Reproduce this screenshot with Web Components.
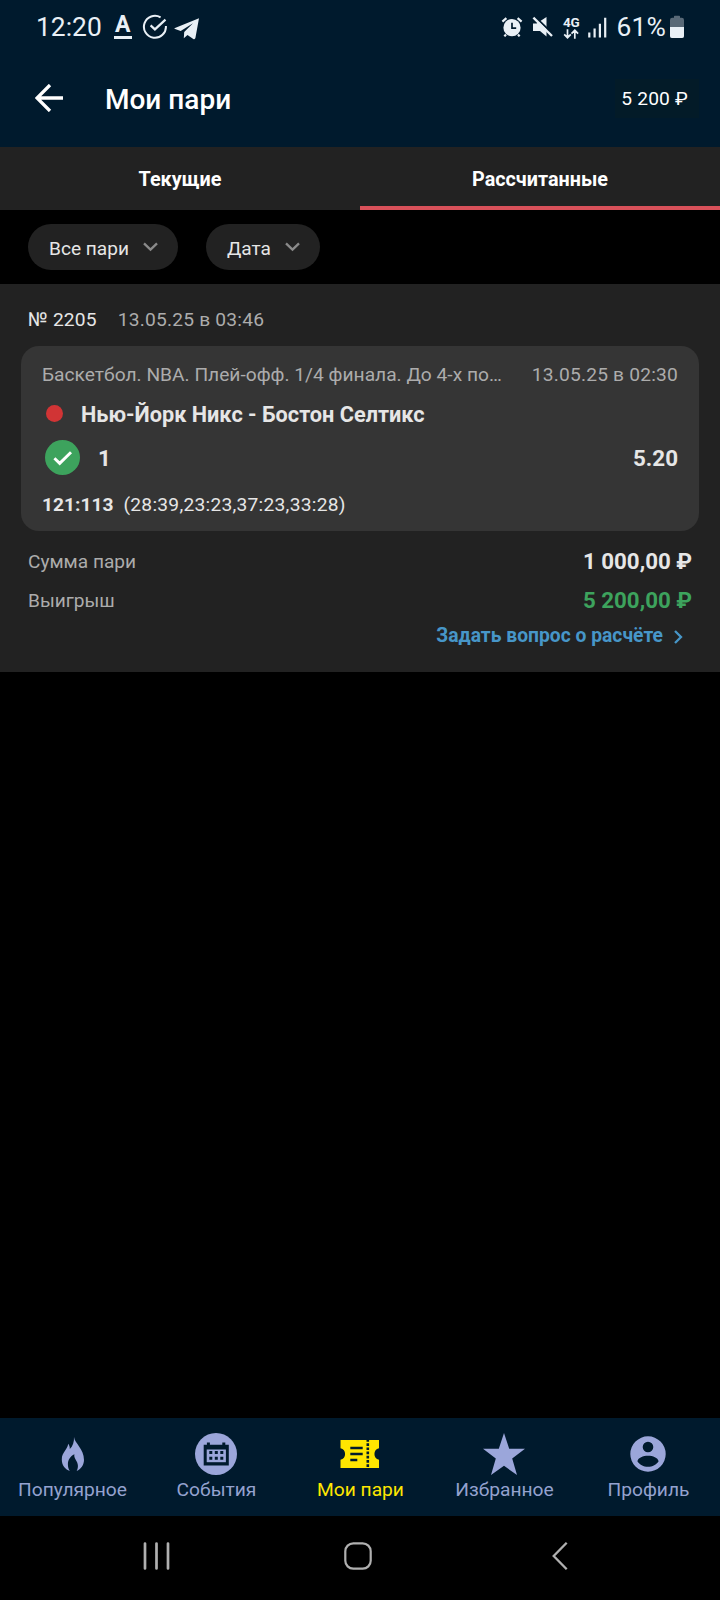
<!DOCTYPE html>
<html lang="ru">
<head>
<meta charset="utf-8">
<title>Мои пари</title>
<style>
    body {
        margin: 0;
        background: #000;
        color: #e6e6e6;
        font-family: Roboto, "Noto Sans", sans-serif;
    }
</style>
</head>
<body>

<bets-screen>
    <status-bar slot="status" time="12:20" battery="61%"></status-bar>
    <app-header slot="header" balance="5 200 ₽">Мои пари</app-header>
    <tab-bar slot="tabs">
        <tab-item>Текущие</tab-item>
        <tab-item active>Рассчитанные</tab-item>
    </tab-bar>
    <filter-bar slot="filters">
        <filter-chip>Все пари</filter-chip>
        <filter-chip>Дата</filter-chip>
    </filter-bar>

    <bet-ticket number="№ 2205" date="13.05.25 в 03:46">
        <bet-event date="13.05.25 в 02:30" pick="1" odds="5.20" score="121:113" periods="(28:39,23:23,37:23,33:28)">
            <span slot="league">Баскетбол. NBA. Плей-офф. 1/4 финала. До 4-х по…</span>
            <span slot="teams">Нью-Йорк Никс - Бостон Селтикс</span>
        </bet-event>
        <sum-row slot="sums" label="Сумма пари">1 000,00 ₽</sum-row>
        <sum-row slot="sums" label="Выигрыш" win>5 200,00 ₽</sum-row>
        <span slot="link">Задать вопрос о расчёте</span>
    </bet-ticket>

    <bottom-nav slot="nav">
        <nav-item icon="fire">Популярное</nav-item>
        <nav-item icon="calendar">События</nav-item>
        <nav-item icon="ticket" active>Мои пари</nav-item>
        <nav-item icon="star">Избранное</nav-item>
        <nav-item icon="profile">Профиль</nav-item>
    </bottom-nav>
    <system-nav slot="system"></system-nav>
</bets-screen>

<script>
const icons = {
	// status bar
	check: [26, 26, '<path d="M18.6 3.4A11 11 0 1 0 23.9 12" fill="none" stroke="currentColor" stroke-width="2"/><path d="M8.600 11.400l4.300 4 10.600-9.800" fill="none" stroke="currentColor" stroke-width="2.2"/>'],
	plane: [26, 24, '<path d="M25 2.2L1 11.9c-.7.4-.6 1 .1 1.2l5.6 1.9L19 7.3 10.2 16l-.4 6.3 3.7-3.2 5.8 3.9c1 .6 1.8.2 2.1-.9z" fill="currentColor"/>'],
	alarm: [22, 22, '<path d="M1.4 5.6l4-3.5M16.6 2.1l4 3.5M5 18.5L3.4 20.4M17 18.5l1.6 1.9" stroke="currentColor" stroke-width="2.2"/><circle cx="11" cy="11.7" r="8.6" fill="currentColor"/><path d="M11 6.8v5.4h4.2" fill="none" stroke="#001a2d" stroke-width="1.7"/>'],
	mute: [22, 22, '<path d="M1 7.4h3.6L14.5 1v13.6L7.8 7.9 14.5 15v5.6L8 14.9H1z" fill="currentColor"/><path d="M2.6.3L21.6 18.7" stroke="#001a2d" stroke-width="2"/><path d="M1.4 1.6L20 20" stroke="currentColor" stroke-width="2.3"/>'],
	arrows: [16, 10, '<path d="M4.5.3v8.3M1.2 5.4l3.3 3.3 3.3-3.3M11.8 9.7V1.4M8.5 4.6l3.3-3.3 3.3 3.3" fill="none" stroke="currentColor" stroke-width="1.7"/>'],
	signal: [19, 21, '<path d="M1.3 20.5v-5M6.6 20.5v-8.9M11.9 20.5V6.7M17.2 20.5V.7" stroke="currentColor" stroke-width="2.2"/>'],
	battery: [14, 24, '<path d="M4 1.4C4 1 4.3.7 4.7.7h4.6c.4 0 .7.3.7.7v1.4h1.8A2.2 2.2 0 0 1 14 5v16a2 2 0 0 1-2 2H2a2 2 0 0 1-2-2V5a2.2 2.2 0 0 1 2.2-2.2H4z" fill="#596977"/><path d="M0 12h14v9a2 2 0 0 1-2 2H2a2 2 0 0 1-2-2z" fill="currentColor"/>'],

	// page
	back: [28, 28, '<path d="M28 14H2M15 1L2 14l13 13" fill="none" stroke="currentColor" stroke-width="3.3"/>'],
	down: [15, 10, '<path d="M1 1.4l6.5 6.3L14 1.4" fill="none" stroke="currentColor" stroke-width="2.3"/>'],
	next: [9, 14, '<path d="M1 1l6 6-6 6" fill="none" stroke="currentColor" stroke-width="2.3"/>'],
	won: [35, 35, '<circle cx="17.5" cy="17.5" r="17.5" fill="#3da35d"/><path d="M9.4 18.2l5.3 5.2L26 12.2" fill="none" stroke="#fff" stroke-width="2.9"/>'],

	// bottom navigation
	fire: [42, 42, '<path d="M23 4C23.700 10.500 33 15.500 33 27c0 5-3.200 9-7.300 11 1.300-2.700 1.700-5.300.6-8.300-1-2.700-3.600-4.900-2.900-8.400-4.200 1.900-6.500 5.700-6.500 10.300 0 2.500.6 4.500 1.900 6.400-4.300-1.800-8-5.400-8-11.600 0-7.200 5.600-9.400 6.400-15.600 1.200 1.500 1.700 3.300 1.600 5.300C21.800 13.200 23.300 9 23 4z" fill="currentColor"/>'],
	calendar: [42, 42, '<circle cx="21" cy="21" r="21" fill="currentColor"/><path d="M8.700 11.700h3.200V9.400h3v2.300h12.400V9.400h3v2.300h3.500v20.700H8.700z" fill="#001a2d"/><path d="M11.700 16.500h19.200v12.700H11.700z" fill="currentColor"/><path d="M14.300 18.100h3v3h-3zM19.800 18.100h3v3h-3zM25.300 18.100h3v3h-3zM14.300 23.800h3v3h-3zM19.800 23.800h3v3h-3zM25.300 23.800h3v3h-3z" fill="#001a2d"/>'],
	ticket: [42, 42, '<path d="M1.500 7H40v8.300a5.900 5.900 0 0 0 0 11.500V35H1.500v-8.200a5.900 5.900 0 0 0 0-11.500z" fill="currentColor"/><path d="M11.300 15h12.400M11.300 21h12.400M11.300 27h7" stroke="#001a2d" stroke-width="2.400"/><path d="M28.800 7v28" stroke="#001a2d" stroke-width="2.600" stroke-dasharray="2.700 1.500" stroke-dashoffset="1"/>'],
	star: [42, 42, '<path d="M21 0l5.200 15.700H42L29.200 25.600 34 42 21 32.800 8 42l4.800-16.400L0 15.700h15.800z" fill="currentColor"/>'],
	profile: [42, 42, '<path fill-rule="evenodd" d="M21 3.300a17.700 17.700 0 1 1 0 35.400 17.700 17.700 0 0 1 0-35.400zM21 8.700a5.300 5.300 0 1 0 0 10.600 5.300 5.300 0 0 0 0-10.600zM10.400 28.200C12.500 31.500 16.500 33.800 21 33.800s8.500-2.300 10.600-5.600C30.800 24.600 26 22.700 21 22.700s-9.800 1.900-10.600 5.500z" fill="currentColor"/>'],

	// system navigation
	recent: [27, 28, '<path d="M2 1.500v25M13.500 1.500v25M25 1.500v25" stroke="currentColor" stroke-width="2.700" stroke-linecap="round"/>'],
	home: [28, 28, '<rect x="1.300" y="1.300" width="25.400" height="25.400" rx="8" fill="none" stroke="currentColor" stroke-width="2.200"/>'],
	prev: [16, 28, '<path d="M14.700.8L1.700 14l13 13.200" fill="none" stroke="currentColor" stroke-width="2.300"/>']
};

class BaseElement extends HTMLElement {
	constructor() {
		super();
		this.attachShadow({ mode: 'open' });
	}

	connectedCallback() {
		this.shadowRoot.innerHTML = this.render();
	}

	attr(name) {
		return this.getAttribute(name) || '';
	}
}

class AppIcon extends BaseElement {
	render() {
		const [width, height, shape] = icons[this.attr('name')];
		return `
            <style>
                :host { display: block; flex: none; }
                svg { display: block; }
            </style>
            <svg width="${width}" height="${height}" viewBox="0 0 ${width} ${height}">${shape}</svg>
        `;
	}
}

class BetsScreen extends BaseElement {
	render() {
		return `
            <style>
                :host {
                    display: flex;
                    flex-direction: column;
                    width: 720px;
                    height: 1600px;
                    overflow: hidden;
                    background: #000;
                }
                .top { background: #001a2d; height: 147px; flex: none; }
                main { flex: 1; }
            </style>
            <div class="top">
                <slot name="status"></slot>
                <slot name="header"></slot>
            </div>
            <slot name="tabs"></slot>
            <slot name="filters"></slot>
            <main><slot></slot></main>
            <slot name="nav"></slot>
            <slot name="system"></slot>
        `;
	}
}

class StatusBar extends BaseElement {
	render() {
		return `
            <style>
                :host {
                    display: flex;
                    justify-content: space-between;
                    height: 54px;
                    padding: 0 36px;
                    box-sizing: border-box;
                    color: #e9f0f6;
                    font-size: 26.4px;
                    line-height: 54px;
                }
                .group { display: flex; align-items: center; }
                .letter {
                    width: 18px;
                    height: 20px;
                    margin: 0 10px 0 12px;
                    border-bottom: 3px solid;
                    font-size: 23px;
                    font-weight: 700;
                    line-height: 18px;
                    text-align: center;
                }
                .plane { margin: 1px 0 0 6px; }
                .mute { margin-left: 9px; }
                .net {
                    margin: 0 0 0 9px;
                    font-size: 13.5px;
                    font-weight: 700;
                    letter-spacing: -.3px;
                    line-height: 14px;
                }
                .signal { margin: 0 9px 0 9px; }
                .percent { letter-spacing: .2px; }
                .battery { margin-left: 4px; }
            </style>
            <div class="group">
                <span>${this.attr('time')}</span>
                <span class="letter">A</span>
                <app-icon name="check"></app-icon>
                <app-icon class="plane" name="plane"></app-icon>
            </div>
            <div class="group">
                <app-icon name="alarm"></app-icon>
                <app-icon class="mute" name="mute"></app-icon>
                <div class="net">4G<app-icon name="arrows"></app-icon></div>
                <app-icon class="signal" name="signal"></app-icon>
                <span class="percent">${this.attr('battery')}</span>
                <app-icon class="battery" name="battery"></app-icon>
            </div>
        `;
	}
}

class AppHeader extends BaseElement {
	render() {
		return `
            <style>
                :host {
                    display: flex;
                    align-items: center;
                    height: 88px;
                    padding: 0 21px 0 35px;
                    color: #fff;
                }
                h1 {
                    flex: 1;
                    margin: 4px 0 0 42px;
                    font-size: 28px;
                    font-weight: 500;
                    line-height: 36px;
                }
                .balance {
                    padding: 1px 11px 0 6px;
                    background: #031b28;
                    font-size: 19.2px;
                    letter-spacing: .2px;
                    line-height: 38px;
                }
            </style>
            <app-icon name="back"></app-icon>
            <h1><slot></slot></h1>
            <span class="balance">${this.attr('balance')}</span>
        `;
	}
}

class TabBar extends BaseElement {
	render() {
		return `
            <style>
                :host { display: flex; flex: none; height: 63px; background: #222; }
            </style>
            <slot></slot>
        `;
	}
}

class TabItem extends BaseElement {
	render() {
		return `
            <style>
                :host {
                    flex: 1;
                    box-sizing: border-box;
                    border-bottom: 4px solid transparent;
                    color: #fff;
                    font-size: 19.8px;
                    font-weight: 700;
                    line-height: 66px;
                    text-align: center;
                }
                :host([active]) { border-color: #d9515a; }
                span { display: block; height: 59px; }
            </style>
            <span><slot></slot></span>
        `;
	}
}

class FilterBar extends BaseElement {
	render() {
		return `
            <style>
                :host {
                    display: flex;
                    flex: none;
                    align-items: center;
                    gap: 28px;
                    height: 74px;
                    padding: 0 28px;
                }
            </style>
            <slot></slot>
        `;
	}
}

class FilterChip extends BaseElement {
	render() {
		return `
            <style>
                :host {
                    display: flex;
                    align-items: center;
                    gap: 14px;
                    height: 46px;
                    padding: 0 20px 0 21px;
                    border-radius: 23px;
                    background: #222;
                    font-size: 19.1px;
                    line-height: 46px;
                }
                span { padding-top: 3px; }
                app-icon { color: #8a8a8a; }
            </style>
            <span><slot></slot></span>
            <app-icon name="down"></app-icon>
        `;
	}
}

class BetTicket extends BaseElement {
	render() {
		return `
            <style>
                :host { display: block; height: 388px; padding-top: 24px; box-sizing: border-box; background: #222; }
                .head {
                    display: flex;
                    gap: 21px;
                    margin-bottom: 14px;
                    padding: 0 28px;
                    font-size: 19.2px;
                    letter-spacing: .2px;
                    line-height: 24px;
                }
                .date { color: #acacac; }
                .sums { display: grid; gap: 13px; margin-top: 17px; padding: 0 28px; }
                .link {
                    display: flex;
                    justify-content: flex-end;
                    align-items: center;
                    gap: 11px;
                    margin-top: 11px;
                    padding-right: 37px;
                    color: #4796c8;
                    font-size: 19.3px;
                    font-weight: 700;
                    line-height: 24px;
                }
                .link app-icon { margin-top: 2px; }
            </style>
            <div class="head">
                <span>${this.attr('number')}</span>
                <span class="date">${this.attr('date')}</span>
            </div>
            <slot></slot>
            <div class="sums"><slot name="sums"></slot></div>
            <div class="link"><slot name="link"></slot><app-icon name="next"></app-icon></div>
        `;
	}
}

class BetEvent extends BaseElement {
	render() {
		return `
            <style>
                :host {
                    display: block;
                    height: 185px;
                    margin: 0 21px;
                    padding: 17px 21px 0;
                    box-sizing: border-box;
                    border-radius: 18px;
                    background: #353535;
                    font-size: 19.2px;
                    line-height: 24px;
                }
                .row { display: flex; align-items: center; }
                .league { color: #acacac; justify-content: space-between; }
                .league span { letter-spacing: .2px; }
                .teams {
                    margin: 15px 0 0 4px;
                    gap: 18px;
                    font-size: 21.7px;
                    font-weight: 700;
                    line-height: 26px;
                }
                .dot { width: 17px; height: 17px; margin-top: -3px; border-radius: 50%; background: #d13435; }
                .pick {
                    gap: 18px;
                    margin: 9px 0 0 3px;
                    font-size: 22.4px;
                    font-weight: 700;
                    line-height: 38px;
                }
                .pick span { padding-top: 2px; }
                .odds { margin-left: auto; }
                .score { gap: 10px; margin-top: 16px; }
                .score span { letter-spacing: .26px; }
            </style>
            <div class="row league">
                <slot name="league"></slot>
                <span>${this.attr('date')}</span>
            </div>
            <div class="row teams"><i class="dot"></i><slot name="teams"></slot></div>
            <div class="row pick">
                <app-icon name="won"></app-icon>
                <span>${this.attr('pick')}</span>
                <span class="odds">${this.attr('odds')}</span>
            </div>
            <div class="row score">
                <b>${this.attr('score')}</b>
                <span>${this.attr('periods')}</span>
            </div>
        `;
	}
}

class SumRow extends BaseElement {
	render() {
		return `
            <style>
                :host {
                    display: flex;
                    justify-content: space-between;
                    font-size: 19.1px;
                    line-height: 26px;
                }
                .label { height: 25px; padding-top: 1px; color: #acacac; }
                .value { font-size: 22.3px; font-weight: 700; }
                :host([win]) .value { color: #3da35d; }
            </style>
            <span class="label">${this.attr('label')}</span>
            <span class="value"><slot></slot></span>
        `;
	}
}

class BottomNav extends BaseElement {
	render() {
		return `
            <style>
                :host { display: flex; flex: none; height: 98px; background: #001a2d; }
            </style>
            <slot></slot>
        `;
	}
}

class NavItem extends BaseElement {
	render() {
		return `
            <style>
                :host {
                    display: flex;
                    flex: 1;
                    flex-direction: column;
                    align-items: center;
                    gap: 2px;
                    padding-top: 15px;
                    color: #94a2cf;
                    font-size: 19.2px;
                    line-height: 26px;
                    white-space: nowrap;
                }
                span { padding-left: 1px; }
                app-icon { color: #9ba6da; }
                :host([active]), :host([active]) app-icon { color: #ffe600; }
            </style>
            <app-icon name="${this.attr('icon')}"></app-icon>
            <span><slot></slot></span>
        `;
	}
}

class SystemNav extends BaseElement {
	render() {
		return `
            <style>
                :host {
                    display: flex;
                    flex: none;
                    justify-content: space-between;
                    height: 84px;
                    padding: 26px 152px 0 143px;
                    box-sizing: border-box;
                    color: #b0b0b0;
                }
                .home { margin-right: 7px; }
            </style>
            <app-icon name="recent"></app-icon>
            <app-icon class="home" name="home"></app-icon>
            <app-icon name="prev"></app-icon>
        `;
	}
}

customElements.define('app-icon', AppIcon);
customElements.define('status-bar', StatusBar);
customElements.define('app-header', AppHeader);
customElements.define('tab-item', TabItem);
customElements.define('tab-bar', TabBar);
customElements.define('filter-chip', FilterChip);
customElements.define('filter-bar', FilterBar);
customElements.define('sum-row', SumRow);
customElements.define('bet-event', BetEvent);
customElements.define('bet-ticket', BetTicket);
customElements.define('nav-item', NavItem);
customElements.define('bottom-nav', BottomNav);
customElements.define('system-nav', SystemNav);
customElements.define('bets-screen', BetsScreen);
</script>
</body>
</html>
